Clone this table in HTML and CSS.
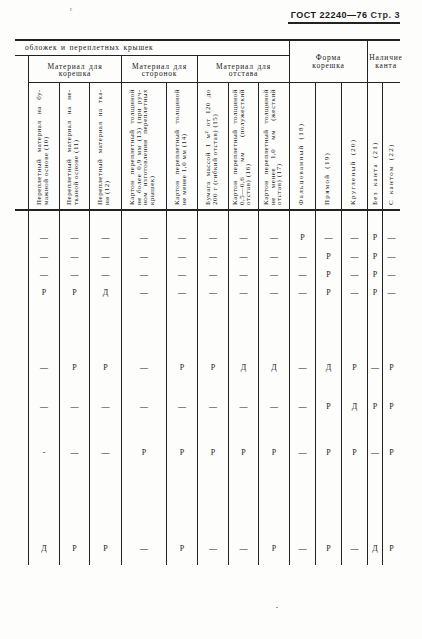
FILE: index.html
```html
<!DOCTYPE html>
<html lang="ru">
<head>
<meta charset="utf-8">
<title>ГОСТ 22240—76 Стр. 3</title>
<link rel="stylesheet" href="styles.css">
</head>
<body>
<div class="page">
  <div class="top">
    <span class="tick">r</span>
    <div class="title"><b>ГОСТ 22240—76</b> <span class="pg">Стр. 3</span></div>
  </div>

  <div class="head">
    <div class="lab cover">обложек и переплетных крышек</div>
    <div class="lab forma">Форма<br>корешка</div>
    <div class="lab kant">Наличие<br>канта</div>
    <div class="lab grp g1">Материал для<br>корешка</div>
    <div class="lab grp g2">Материал для<br>сторонок</div>
    <div class="lab grp g3">Материал для<br>отстава</div>
    <div class="blank"></div>

    <div class="vh"><div class="vt"><span class="j">Переплетный материал на бу-</span><span>мажной основе (10)</span></div></div>
    <div class="vh"><div class="vt"><span class="j">Переплетный материал на не-</span><span>тканой основе (11)</span></div></div>
    <div class="vh"><div class="vt"><span class="j">Переплетный материал на тка-</span><span>ни (12)</span></div></div>
    <div class="vh"><div class="vt"><span class="j">Картон переплетный толщиной</span><span class="j">не более 0,9 мм (13) (при руч-</span><span class="j">ном изготовлении переплетных</span><span>крышек)</span></div></div>
    <div class="vh"><div class="vt"><span class="j">Картон переплетный толщиной</span><span>не менее 1,0 мм (14)</span></div></div>
    <div class="vh"><div class="vt"><span class="j">Бумага массой 1 м² от 120 до</span><span>200 г (гибкий отстав) (15)</span></div></div>
    <div class="vh"><div class="vt"><span class="j">Картон переплетный толщиной</span><span class="j">0,5—0,6 мм (полужесткий</span><span>отстав) (16)</span></div></div>
    <div class="vh"><div class="vt"><span class="j">Картон переплетный толщиной</span><span class="j">не менее 1,0 мм (жесткий</span><span>отстав) (17)</span></div></div>
    <div class="vh"><div class="vt wide"><span>Фальцованный (18)</span></div></div>
    <div class="vh"><div class="vt wide"><span>Прямой (19)</span></div></div>
    <div class="vh"><div class="vt wide"><span>Кругленый (20)</span></div></div>
    <div class="vh narrow"><div class="vt wide"><span>Без канта (21)</span></div></div>
    <div class="vh narrow"><div class="vt wide"><span>С кантом (22)</span></div></div>
  </div>

  <div class="body">
    <div class="col"><span>—</span><span>—</span><span>—</span><span>Р</span><span>—</span><span>—</span><span>-</span><span>Д</span></div>
    <div class="col"><span>—</span><span>—</span><span>—</span><span>Р</span><span>Р</span><span>—</span><span>—</span><span>Р</span></div>
    <div class="col"><span>—</span><span>—</span><span>—</span><span>Д</span><span>Р</span><span>—</span><span>—</span><span>Р</span></div>
    <div class="col"><span>—</span><span>—</span><span>—</span><span>—</span><span>—</span><span>—</span><span>Р</span><span>—</span></div>
    <div class="col"><span>—</span><span>—</span><span>—</span><span>—</span><span>Р</span><span>—</span><span>Р</span><span>Р</span></div>
    <div class="col"><span>—</span><span>—</span><span>—</span><span>—</span><span>Р</span><span>—</span><span>Р</span><span>—</span></div>
    <div class="col"><span>—</span><span>—</span><span>—</span><span>—</span><span>Д</span><span>—</span><span>Р</span><span>—</span></div>
    <div class="col"><span>—</span><span>—</span><span>—</span><span>—</span><span>Д</span><span>—</span><span>Р</span><span>Р</span></div>
    <div class="col"><span>Р</span><span>—</span><span>—</span><span>—</span><span>—</span><span>—</span><span>—</span><span>—</span></div>
    <div class="col"><span>—</span><span>Р</span><span>Р</span><span>Р</span><span>Д</span><span>Р</span><span>Р</span><span>Р</span></div>
    <div class="col"><span>—</span><span>—</span><span>—</span><span>—</span><span>Р</span><span>Д</span><span>Р</span><span>—</span></div>
    <div class="col"><span>Р</span><span>Р</span><span>Р</span><span>Р</span><span>—</span><span>Р</span><span>—</span><span>Д</span></div>
    <div class="col"><span>—</span><span>—</span><span>—</span><span>—</span><span>Р</span><span>Р</span><span>Р</span><span>Р</span></div>
  </div>

  <div class="dot"></div>
</div>
</body>
</html>
```
FILE: styles.css
```css
* { box-sizing: border-box; }
html, body { margin: 0; }
body {
  background: #fdfdfc;
  color: #1a1a1a;
  font-family: "Liberation Serif", "Times New Roman", serif;
  width: 422px;
  height: 639px;
  overflow: hidden;
}
.page {
  --cols: 31px 30px 32px 45px 31px 31px 30px 31px 26px 26px 26px 15px 18px;
  --line: #222;
  padding-left: 15px;
  width: 400px;
}

/* running head */
.top { display: flex; align-items: flex-start; }
.tick {
  font-size: 6px;
  line-height: 6px;
  color: #777;
  margin: 6px 0 0 55px;
}
.title {
  margin-left: auto;
  width: 112px;
  padding: 9px 0 1px;
  border-bottom: 2px solid var(--line);
  font-family: "Liberation Sans", Arial, sans-serif;
  font-size: 9px;
  line-height: 12px;
  letter-spacing: .5px;
  text-align: right;
  white-space: nowrap;
}
.title b { font-weight: bold; }
.title .pg { font-weight: bold; color: #333; }

/* table head */
.head {
  margin-top: 15px;
  display: grid;
  grid-template-columns: 13px var(--cols);
  grid-template-rows: 15px 27px 126px;
  border-top: 2px solid var(--line);
  border-bottom: 2px solid var(--line);
}
.lab {
  font-size: 7.5px;
  line-height: 7.5px;
  letter-spacing: .8px;
  word-spacing: 1px;
}
.cover {
  grid-column: 1 / 10;
  grid-row: 1;
  border-bottom: 1px solid var(--line);
  padding-left: 10px;
  display: flex;
  align-items: center;
}
.forma, .kant, .grp {
  border-left: 1px solid var(--line);
  border-bottom: 1px solid var(--line);
  display: flex;
  align-items: center;
  justify-content: center;
  text-align: center;
}
.forma { grid-column: 10 / 13; grid-row: 1 / 3; }
.kant { grid-column: 13 / 15; grid-row: 1 / 3; padding-left: 4px; white-space: nowrap; }
.grp { grid-row: 2; padding-top: 2px; }
.g1 { grid-column: 2 / 5; }
.g2 { grid-column: 5 / 7; }
.g3 { grid-column: 7 / 10; }
.blank { grid-column: 1; grid-row: 2 / 4; }

.vh {
  border-left: 1px solid var(--line);
  display: flex;
  justify-content: center;
  align-items: flex-end;
  padding: 0 3px 4px 0;
}
.vh.narrow { padding-right: 0; }
.vt {
  writing-mode: vertical-rl;
  transform: rotate(180deg);
  height: 116px;
  font-size: 7px;
  line-height: 6.6px;
  letter-spacing: .55px;
}
.vt span { display: block; white-space: nowrap; }
.vt .j { text-align: justify; text-align-last: justify; }
.vt.wide { letter-spacing: 1.3px; word-spacing: 2px; }

/* table body */
.body {
  display: grid;
  grid-template-columns: var(--cols);
  padding-left: 13px;
}
.col {
  border-left: 1px solid var(--line);
  height: 354px;
  padding-top: 18px;
  display: flex;
  flex-direction: column;
  font-size: 8px;
  text-align: center;
}
.col span { height: 18px; line-height: 18px; }
.col span:nth-child(2) { margin-top: 1px; }
.col span:nth-child(5) { margin-top: 57px; }
.col span:nth-child(6) { margin-top: 21px; }
.col span:nth-child(7) { margin-top: 28px; }
.col span:nth-child(8) { margin-top: 78px; }

.dot {
  width: 2px;
  height: 1px;
  background: #999;
  margin: 42px 0 0 261px;
}
```
